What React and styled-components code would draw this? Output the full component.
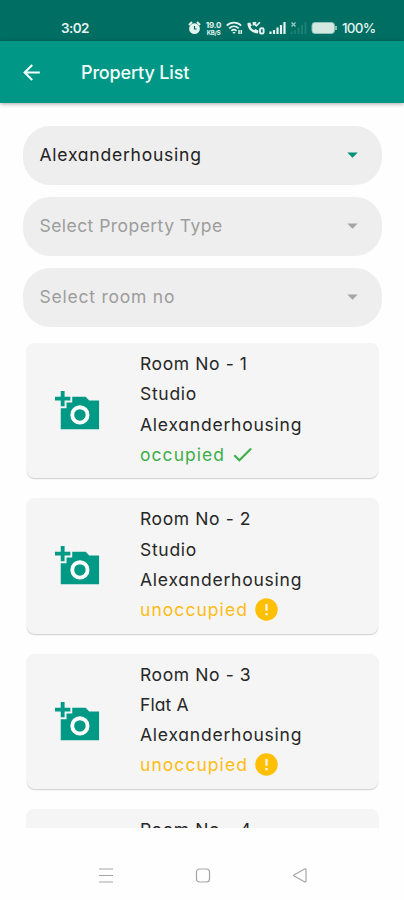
import React from 'react'
import styled, { createGlobalStyle } from 'styled-components'
import { MdArrowBack, MdArrowDropDown, MdCheck, MdError } from 'react-icons/md'

const GlobalStyle = createGlobalStyle`
    * {
        box-sizing: border-box;
    }
    body {
        margin: 0;
        background: #fefefe;
        font-family: Inter, "Liberation Sans", sans-serif;
        font-feature-settings: "cv11", "ss03";
    }
`

const Screen = styled.div`
    width: 404px;
    height: 900px;
    display: flex;
    flex-direction: column;
    overflow: hidden;
    background: #fefefe;
`

const StatusBar = styled.div`
    height: 41px;
    flex-shrink: 0;
    display: flex;
    align-items: flex-end;
    justify-content: space-between;
    padding: 0 29px 3px 61px;
    background: #006e63;
    color: #e4f3f0;
`

const Clock = styled.span`
    font-size: 13.5px;
    line-height: 20px;
    font-weight: 600;
    letter-spacing: -0.6px;
`

const StatusIcons = styled.div`
    height: 20px;
    display: flex;
    align-items: center;
`

const Battery = styled.span`
    width: 33px;
    margin-left: 5px;
    font-size: 13.5px;
    line-height: 20px;
    font-weight: 500;
    letter-spacing: -0.8px;
`

const Header = styled.header`
    height: 62px;
    flex-shrink: 0;
    display: flex;
    align-items: center;
    gap: 37px;
    padding-left: 19px;
    background: #009786;
    color: #f1fffc;
    box-shadow: 0 1px 4px rgba(0, 0, 0, 0.35);
    z-index: 1;
`

const Title = styled.h1`
    margin: 0;
    font-size: 18px;
    font-weight: 500;
    letter-spacing: -0.15px;
`

const Filters = styled.div`
    flex-shrink: 0;
    display: flex;
    flex-direction: column;
    gap: 12px;
    padding: 23px 22px 0 23px;
`

const Select = styled.div`
    height: 59px;
    display: flex;
    align-items: center;
    justify-content: space-between;
    padding: 0 17px 2px 16.5px;
    border-radius: 27px;
    background: #eee;
    font-size: 17.5px;
    font-weight: 380;
    letter-spacing: ${({ $spacing }) => $spacing}px;
    color: ${({ $filled }) => ($filled ? '#222' : '#9d9d9d')};
    svg {
        color: ${({ $filled }) => ($filled ? '#009077' : '#a6a6a6')};
    }
`

const List = styled.div`
    height: 485px;
    flex-shrink: 0;
    margin-top: 16px;
    padding: 0 26px 0 27px;
    display: flex;
    flex-direction: column;
    gap: 20px;
    overflow: hidden;
`

const Card = styled.div`
    height: 135.3px;
    flex-shrink: 0;
    display: grid;
    grid-template-columns: 113px 1fr;
    border-radius: 8px;
    background: #f5f5f5;
    box-shadow: 0 1px 1.5px rgba(0, 0, 0, 0.2);
`

const Photo = styled.div`
    display: flex;
    padding: 46px 0 0 28px;
    color: #009985;
`

const Details = styled.div`
    padding-top: 5.3px;
`

const Line = styled.div`
    height: 30.3px;
    display: flex;
    align-items: center;
    font-size: 17.5px;
    font-weight: 380;
    letter-spacing: ${({ $spacing }) => $spacing}px;
    white-space: pre;
    color: #272727;
`

const Status = styled(Line)`
    gap: 5px;
    color: ${({ $occupied }) => ($occupied ? '#3fae49' : '#ffbc14')};
`

const NavBar = styled.nav`
    flex: 1;
    display: flex;
    justify-content: space-between;
    padding: 39px 96px 0 98px;
    color: #a5a5a5;
`

const AddPhotoIcon = () => (
    <svg width="46" height="46" viewBox="0 0 24 24">
        <path
            fill="currentColor"
            d="M3 4V1h2v3h3v2H5v3H3V6H0V4h3zm3 6V7h3V4h7l1.83 2H23v15H3V10h3z"
        />
        <circle cx="13" cy="13.5" r="4" fill="none" stroke="#fff" strokeWidth="2" />
    </svg>
)

const AlarmIcon = () => (
    <svg width="13" height="14" viewBox="0 0 13 14">
        <path d="M1 4 4 1M12 4 9 1" stroke="currentColor" strokeWidth="2" />
        <circle cx="6.5" cy="7.7" r="5.4" fill="currentColor" />
        <path d="M6.5 5v3h2.2" fill="none" stroke="#006e63" strokeWidth="1.2" />
    </svg>
)

const SpeedBox = styled.div`
    width: 17px;
    margin-left: 4px;
    display: flex;
    flex-direction: column;
    align-items: center;
    font-size: 8px;
    line-height: 8px;
    font-weight: 700;
    letter-spacing: -0.2px;
`

const SpeedUnit = styled.span`
    font-size: 6px;
    line-height: 7px;
`

const StatusSvg = styled.svg`
    margin-left: 4px;
    flex-shrink: 0;
`

const WifiIcon = () => (
    <StatusSvg width="17" height="14" viewBox="0 0 17 14">
        <g fill="none" stroke="currentColor" strokeWidth="1.7">
            <path d="M.7 4.7c4-4 10.5-4 14.5 0" />
            <path d="M3.2 7.4c2.8-2.7 6.7-2.7 9.5 0" />
            <path d="M5.4 9.8c1.5-1.4 3.6-1.4 5.1 0" />
        </g>
        <path d="m8 13-1.7-2h3.4z" fill="currentColor" />
        <path d="M13 9v4M15.3 9v4" stroke="currentColor" strokeWidth="1.5" />
    </StatusSvg>
)

const CallIcon = () => (
    <StatusSvg width="18" height="14" viewBox="0 0 18 14">
        <path
            d="M.5 2 3.2 1.5l1.6 3-1.3 1.2c.8 1.5 2 2.5 3.7 3.3L8.6 8l2.9 1.7-.6 2.8C5 12.5 0 7.5.5 2z"
            fill="currentColor"
        />
        <path d="M6.5 4.5V1.7h2.8M6.5 1.7 9.3 4.8l3.7-3.6" fill="none" stroke="currentColor" strokeWidth="1.6" />
        <rect x="13" y="7.3" width="3.6" height="5.2" rx="1.3" fill="none" stroke="currentColor" strokeWidth="1.9" />
    </StatusSvg>
)

const SignalIcon = () => (
    <StatusSvg width="17" height="14" viewBox="0 0 17 14">
        <path
            d="M1.5 13v-2.5M5 13V9M8.5 13V6.5M12 13V4M15.5 13V1"
            stroke="currentColor"
            strokeWidth="2.2"
        />
    </StatusSvg>
)

const NoSignalIcon = () => (
    <StatusSvg width="17" height="14" viewBox="0 0 17 14">
        <path
            d="M1.5 13v-2.5M5 13V9M8.5 13V6.5M12 13V4M15.5 13V1"
            stroke="#208277"
            strokeWidth="1.8"
        />
        <path d="m1.5 1.5 4 4m0-4-4 4" stroke="#9accc5" strokeWidth="1.3" />
    </StatusSvg>
)

const BatteryIcon = () => (
    <StatusSvg width="26" height="12" viewBox="0 0 26 12">
        <rect x="1" y=".5" width="22.5" height="11" rx="3" fill="#d4e8e2" stroke="#8fc1b9" />
        <path d="M25 4v4" stroke="#b5d9d3" strokeWidth="1.5" />
    </StatusSvg>
)

const WarningIcon = styled(MdError)`
    color: #ffc003;
`

const rooms = [
    { no: 1, type: 'Studio', occupied: true },
    { no: 2, type: 'Studio', occupied: false },
    { no: 3, type: 'Flat A', occupied: false },
    { no: 4, type: 'Studio', occupied: false },
]

const RoomCard = ({ room }) => (
    <Card>
        <Photo>
            <AddPhotoIcon />
        </Photo>
        <Details>
            <Line $spacing={0.6}>Room No - {room.no}</Line>
            <Line $spacing={room.type === 'Studio' ? 0.7 : 0.1}>{room.type}</Line>
            <Line $spacing={0.77}>Alexanderhousing</Line>
            <Status $occupied={room.occupied} $spacing={1.05}>
                {room.occupied ? 'occupied' : 'unoccupied'}
                {room.occupied ? <MdCheck size={25} /> : <WarningIcon size={27} />}
            </Status>
        </Details>
    </Card>
)

const App = () => {
    return (
        <>
            <GlobalStyle />
            <Screen>
                <StatusBar>
                    <Clock>3:02</Clock>
                    <StatusIcons>
                        <AlarmIcon />
                        <SpeedBox>
                            <span>19.0</span>
                            <SpeedUnit>KB/S</SpeedUnit>
                        </SpeedBox>
                        <WifiIcon />
                        <CallIcon />
                        <SignalIcon />
                        <NoSignalIcon />
                        <BatteryIcon />
                        <Battery>100%</Battery>
                    </StatusIcons>
                </StatusBar>
                <Header>
                    <MdArrowBack size={25} />
                    <Title>Property List</Title>
                </Header>
                <Filters>
                    <Select $filled $spacing={0.77}>
                        Alexanderhousing
                        <MdArrowDropDown size={25} />
                    </Select>
                    <Select $spacing={0.45}>
                        Select Property Type
                        <MdArrowDropDown size={25} />
                    </Select>
                    <Select $spacing={0.77}>
                        Select room no
                        <MdArrowDropDown size={25} />
                    </Select>
                </Filters>
                <List>
                    {rooms.map((room) => (
                        <RoomCard key={room.no} room={room} />
                    ))}
                </List>
                <NavBar>
                    <svg width="16" height="17" viewBox="0 0 16 17" stroke="currentColor" strokeWidth="1.2">
                        <path d="M1 2h14M1 8.5h14M1 15h14" />
                    </svg>
                    <svg width="16" height="17" viewBox="0 0 16 17" fill="none" stroke="currentColor" strokeWidth="1.2">
                        <rect x="1.5" y="2" width="13" height="13" rx="3" />
                    </svg>
                    <svg width="16" height="17" viewBox="0 0 16 17" fill="none" stroke="currentColor" strokeWidth="1.2">
                        <path d="M2 8 12.5 2q1.5-.5 1.5 1v11q0 1.5-1.5.7L2 9q-.8-.5 0-1z" />
                    </svg>
                </NavBar>
            </Screen>
        </>
    )
}

export default App
